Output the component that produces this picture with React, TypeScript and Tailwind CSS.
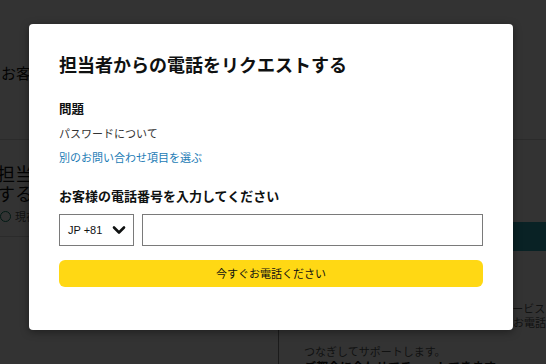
import React from "react";

export default function App() {
  return (
    <div className="relative w-[546px] h-[364px] overflow-hidden bg-white text-[#0f1111] font-['Noto_Sans_CJK_JP','Noto_Sans',sans-serif]">
      {/* underlying page */}
      <div className="flex flex-col w-full h-full">
        <div className="h-[140px] shrink-0 border-b border-[#d5d5d5] flex items-start pt-[62px] pl-[1px]">
          <span className="text-[15px] leading-[22px]">お客様サポート</span>
        </div>
        <div className="flex flex-1">
          <div className="w-[278px] shrink-0 flex flex-col">
            <div className="h-[97px] border-b border-[#d5d5d5] pt-[23px]">
              <div className="text-[18px] leading-[20px] w-[260px] -ml-[3px]">担当者からの電話をリクエストする</div>
              <div className="flex items-center gap-[4px] mt-[5px] text-[11px] leading-[16px] text-[#565959]">
                <span className="w-[11px] h-[11px] rounded-full border border-[#067d62] inline-block shrink-0" />
                <span>現在の待ち時間</span>
              </div>
            </div>
          </div>
          <div className="flex-1 border-l border-[#888] pl-[25px] pr-[23px] pt-[82px]">
            <div className="h-[29px] rounded-[6px] bg-[#2fa8b8]" />
            <div className="mt-[50px] text-[11px] leading-[14px] text-[#565959]">
              <p className="whitespace-nowrap">お客様のご都合に合わせて、カスタマーサービスを</p>
              <p className="whitespace-nowrap">の担当者が折り返しお電話し、担当部署にお電話</p>
              <p className="mt-[15px] whitespace-nowrap">つなぎしてサポートします。</p>
              <p className="mt-[1px] text-[12px] leading-[16px] font-bold text-[#0f1111] whitespace-nowrap">ご都合に合わせてチャットできます</p>
            </div>
          </div>
        </div>
      </div>

      {/* overlay */}
      <div className="absolute inset-0 bg-black/80" />

      {/* modal */}
      <div className="absolute left-[29px] top-[24px] w-[484px] h-[306px] bg-white rounded-[4px] shadow-[0_2px_8px_rgba(0,0,0,0.4)] pt-[28px] px-[30px]">
        <h2 className="text-[18px] font-bold leading-[24px] text-[#0f1111]">担当者からの電話をリクエストする</h2>
        <div className="mt-[24px] text-[12.5px] font-bold leading-[18px] text-[#0f1111]">問題</div>
        <div className="mt-[6px] text-[11px] leading-[18px] text-[#333]">パスワードについて</div>
        <div className="mt-[6px] text-[11px] leading-[18px] text-[#1b7bb5]">別のお問い合わせ項目を選ぶ</div>
        <div className="mt-[21px] text-[13px] font-semibold leading-[18px] text-[#0f1111]">お客様の電話番号を入力してください</div>
        <div className="mt-[9px] flex gap-[8px] h-[32px]">
          <div className="w-[75px] h-full border border-[#7a7a7a] flex items-center pl-[8px] pr-[6px] justify-between">
            <span className="text-[11px] text-[#0f1111] font-['Liberation_Sans','Noto_Sans_CJK_JP',sans-serif]">JP +81</span>
            <svg width="14" height="10" viewBox="0 0 14 10" className="mr-[1px]">
              <path d="M2 2.5 L7 7.5 L12 2.5" fill="none" stroke="#0f1111" strokeWidth="2.6" strokeLinecap="round" strokeLinejoin="round" />
            </svg>
          </div>
          <div className="flex-1 h-full border border-[#7a7a7a]" />
        </div>
        <button className="mt-[14px] w-full h-[27px] rounded-[6px] bg-[#ffd814] text-[11px] text-[#0f1111] flex items-center justify-center">
          今すぐお電話ください
        </button>
      </div>
    </div>
  );
}
